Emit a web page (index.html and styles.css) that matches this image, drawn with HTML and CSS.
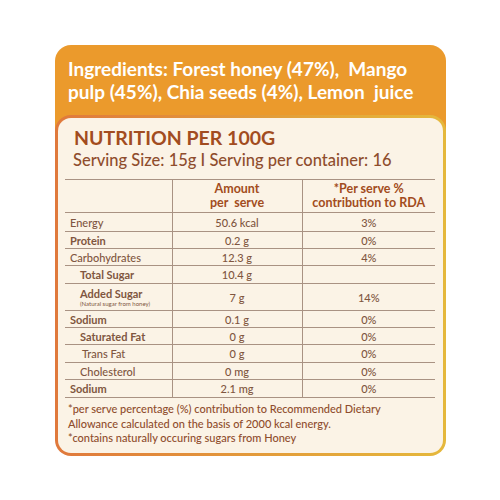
FILE: index.html
```html
<!DOCTYPE html>
<html lang="en">
<head>
    <meta charset="UTF-8">
    <meta name="viewport" content="width=device-width, initial-scale=1.0">
    <title>Nutrition Label</title>
    <link rel="stylesheet" href="styles.css">
</head>
<body>
    <div class="label">
        <div class="ingredients">
            Ingredients: Forest honey (47%), &nbsp;Mango pulp (45%), Chia seeds (4%), Lemon &nbsp;juice
        </div>

        <div class="panel">
            <h1 class="title">NUTRITION PER 100G</h1>
            <div class="serving">Serving Size: 15g I Serving per container: 16</div>

            <table class="facts">
                <thead>
                    <tr>
                        <th></th>
                        <th>Amount<br>per &nbsp;serve</th>
                        <th>*Per serve %<br>contribution to RDA</th>
                    </tr>
                </thead>
                <tbody>
                    <tr class="r-energy"><td>Energy</td><td>50.6 kcal</td><td>3%</td></tr>
                    <tr><td class="bold">Protein</td><td>0.2 g</td><td>0%</td></tr>
                    <tr><td>Carbohydrates</td><td>12.3 g</td><td>4%</td></tr>
                    <tr class="r-tall"><td class="bold sub">Total Sugar</td><td>10.4 g</td><td></td></tr>
                    <tr class="r-added">
                        <td class="bold sub">Added Sugar<span class="note">(Natural sugar from honey)</span></td>
                        <td>7 g</td><td>14%</td>
                    </tr>
                    <tr><td class="bold">Sodium</td><td>0.1 g</td><td>0%</td></tr>
                    <tr><td class="bold sub">Saturated Fat</td><td>0 g</td><td>0%</td></tr>
                    <tr class="r-tall"><td class="sub deep">Trans Fat</td><td>0 g</td><td>0%</td></tr>
                    <tr><td class="sub">Cholesterol</td><td>0 mg</td><td>0%</td></tr>
                    <tr class="r-tall"><td class="bold">Sodium</td><td>2.1 mg</td><td>0%</td></tr>
                </tbody>
            </table>

            <div class="footnotes">
                <p>*per serve percentage (%) contribution to Recommended Dietary<br>Allowance calculated on the basis of 2000 kcal energy.</p>
                <p>*contains naturally occuring sugars from Honey</p>
            </div>
        </div>
    </div>
</body>
</html>
```

FILE: styles.css
```css
* {
    margin: 0;
    padding: 0;
    box-sizing: border-box;
}

body {
    background: #ffffff;
    font-family: Lato, "Open Sans", sans-serif;
    width: 500px;
    height: 500px;
}

.label {
    width: 391px;
    margin: 45px 0 0 55px;
    border-radius: 16px 16px 0 0;
    background: linear-gradient(#eb9a2c 0, #eb9a2c 110px, transparent 110px);
}

.ingredients {
    color: #ffffff;
    font-weight: 700;
    font-size: 19px;
    line-height: 23px;
    padding: 12px 10px 12px 13px;
}

.panel {
    height: 341px;
    border: 3px solid transparent;
    border-radius: 16px;
    background:
        linear-gradient(#fbf3e6, #fbf3e6) padding-box,
        linear-gradient(90deg, #e0793c, #e3a03a 60%, #e5b83c) border-box;
    padding: 8px 8px 0 7px;
}

.title {
    color: #a24c20;
    font-size: 19.5px;
    font-weight: 700;
    line-height: 23px;
    margin-left: 9px;
}

.serving {
    color: #8f4d2d;
    font-size: 16.5px;
    font-weight: 500;
    line-height: 20px;
    margin: 1px 0 0 8px;
}

.facts {
    width: 100%;
    border-collapse: collapse;
    margin-top: 9px;
    color: #80563f;
    font-size: 11px;
}

.facts th,
.facts td {
    border-top: 1px solid #a99283;
    border-bottom: 1px solid #a99283;
    text-align: center;
    font-weight: 500;
    height: 17px;
    padding: 0;
}

.facts th + th,
.facts td + td {
    border-left: 1px solid #a99283;
}

.facts th {
    height: 33px;
    color: #a24c20;
    font-weight: 700;
    font-size: 12.5px;
    line-height: 14px;
}

.facts th:first-child,
.facts td:first-child {
    width: 107px;
    text-align: left;
    padding-left: 5px;
}

.facts th:nth-child(2) {
    width: 130px;
}

.facts td.bold {
    font-weight: 700;
}

.facts td.sub {
    padding-left: 15px;
}

.facts td.deep {
    padding-left: 17px;
}

.r-energy td {
    height: 19px;
}

.r-tall td {
    height: 18px;
}

.r-added td {
    height: 27px;
}

.note {
    display: block;
    font-size: 6px;
    font-weight: 400;
    line-height: 8px;
}

.footnotes {
    color: #8f4d2d;
    font-size: 11px;
    font-weight: 500;
    line-height: 14.5px;
    margin: 4px 0 0 3px;
}
```
